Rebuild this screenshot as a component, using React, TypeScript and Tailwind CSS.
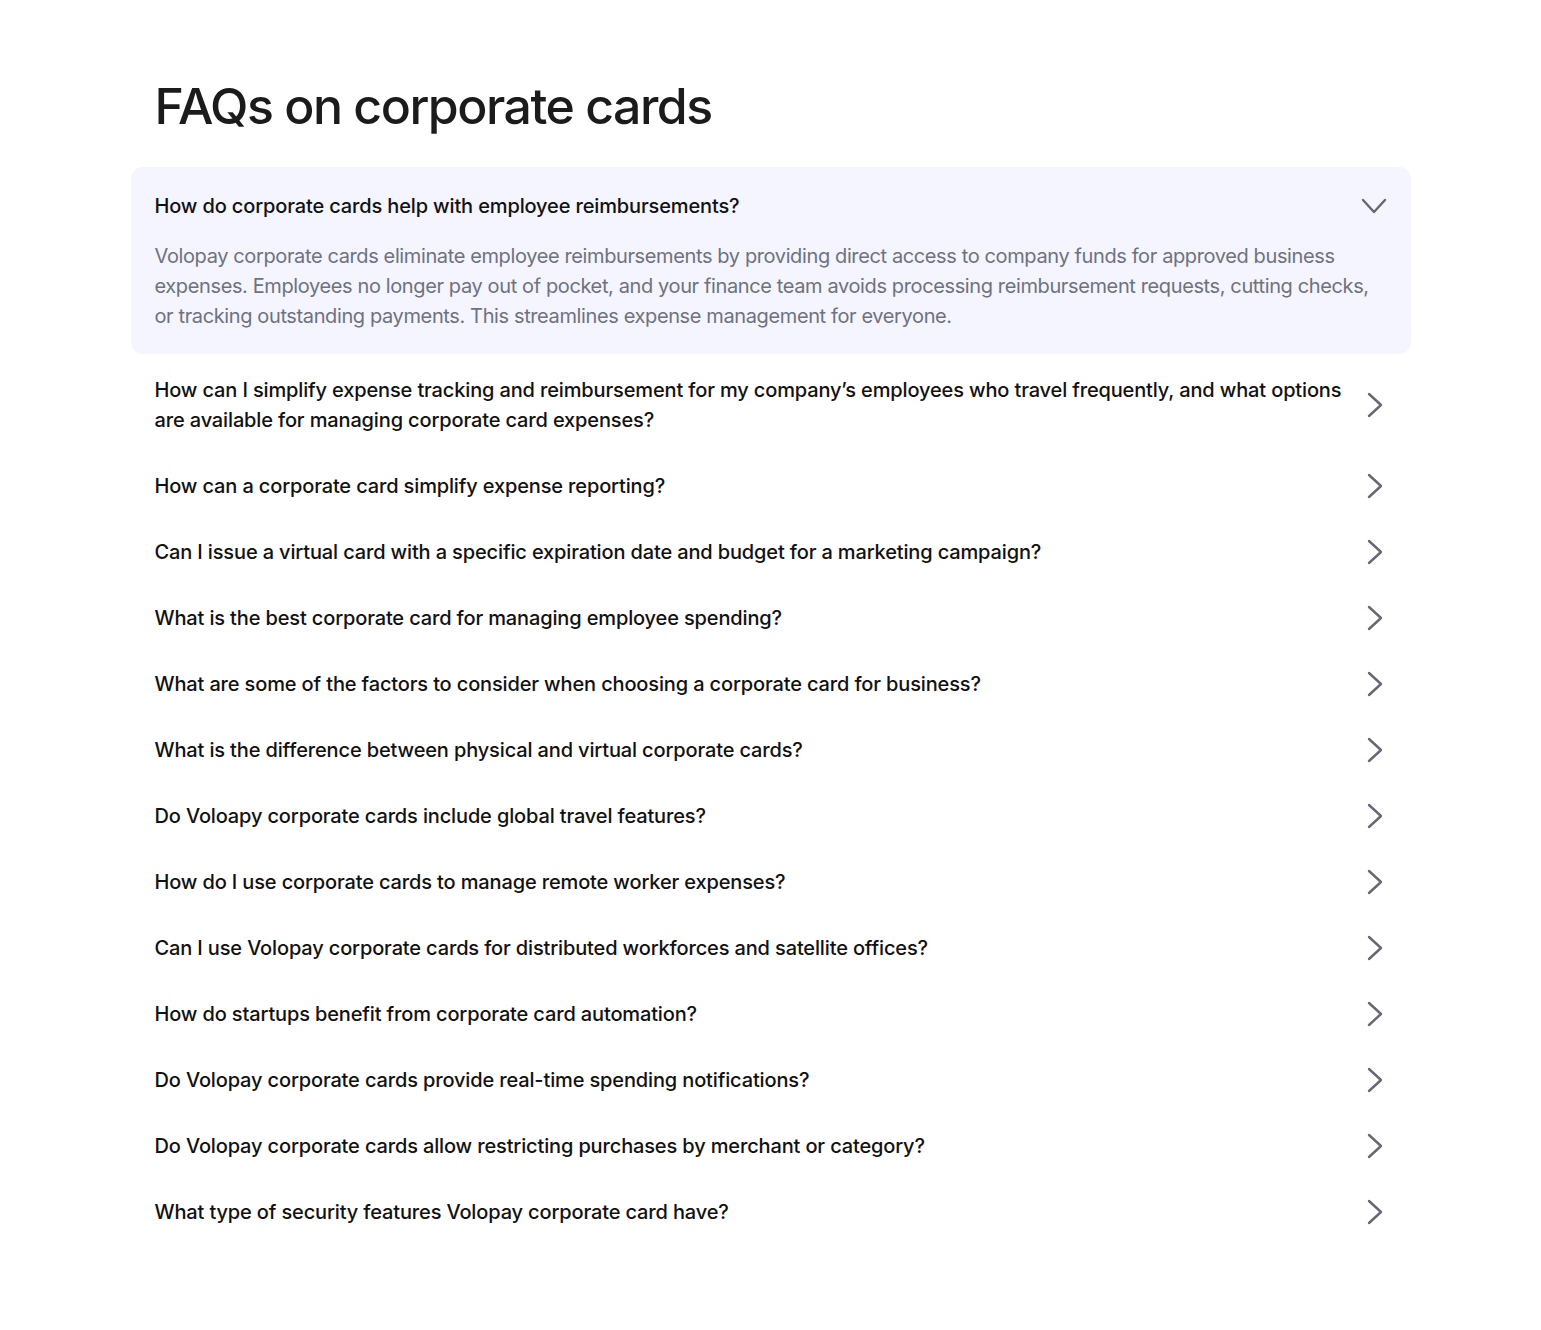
import React, { useState } from 'react';

const faqs = [
  {
    q: 'How do corporate cards help with employee reimbursements?',
    a: 'Volopay corporate cards eliminate employee reimbursements by providing direct access to company funds for approved business expenses. Employees no longer pay out of pocket, and your finance team avoids processing reimbursement requests, cutting checks, or tracking outstanding payments. This streamlines expense management for everyone.',
  },
  {
    q: 'How can I simplify expense tracking and reimbursement for my company\u2019s employees who travel frequently, and what options are available for managing corporate card expenses?',
  },
  { q: 'How can a corporate card simplify expense reporting?' },
  { q: 'Can I issue a virtual card with a specific expiration date and budget for a marketing campaign?' },
  { q: 'What is the best corporate card for managing employee spending?' },
  { q: 'What are some of the factors to consider when choosing a corporate card for business?' },
  { q: 'What is the difference between physical and virtual corporate cards?' },
  { q: 'Do Voloapy corporate cards include global travel features?' },
  { q: 'How do I use corporate cards to manage remote worker expenses?' },
  { q: 'Can I use Volopay corporate cards for distributed workforces and satellite offices?' },
  { q: 'How do startups benefit from corporate card automation?' },
  { q: 'Do Volopay corporate cards provide real-time spending notifications?' },
  { q: 'Do Volopay corporate cards allow restricting purchases by merchant or category?' },
  { q: 'What type of security features Volopay corporate card have?' },
];

const ChevronRight = () => (
  <svg className="mr-1 shrink-0" width="16" height="26" viewBox="0 0 16 26" fill="none" stroke="#646875" strokeWidth={2.4} strokeLinecap="round" strokeLinejoin="round">
    <path d="M2 2l12 11-12 11" />
  </svg>
);

const ChevronDown = () => (
  <svg className="shrink-0" width="26" height="16" viewBox="0 0 26 16" fill="none" stroke="#646875" strokeWidth={2.4} strokeLinecap="round" strokeLinejoin="round">
    <path d="M2 2l11 12 11-12" />
  </svg>
);

export default function App() {
  const [open, setOpen] = useState(0);

  return (
    <div className="min-h-[1330px] bg-white font-['Inter',sans-serif] text-[#161616]">
      <div className="mx-auto w-[1280px] pt-[72px]">
        <h1 className="px-6 text-[50px] leading-[68px] font-medium tracking-[-0.03em] text-[#1b1b1b]">
          FAQs on corporate cards
        </h1>
        <div className="mt-[27px] flex flex-col">
          {faqs.map((f, i) =>
            i === open ? (
              <div key={i} className="mb-[3px] rounded-xl bg-[#f4f5fe] px-6 pt-6 pb-[23px]">
                <button onClick={() => setOpen(-1)} className="flex w-full items-center justify-between gap-6 text-left">
                  <span className="text-[20px] leading-[30px] font-medium tracking-[-0.007em] text-[#111]">{f.q}</span>
                  <ChevronDown />
                </button>
                <p className="mt-5 pr-2 text-[20px] leading-[30px] tracking-[-0.019em] text-[#6e7280]">{f.a}</p>
              </div>
            ) : (
              <button
                key={i}
                onClick={() => setOpen(i)}
                className="flex w-full items-center justify-between gap-6 px-6 py-[18px] text-left"
              >
                <span className="text-[20px] leading-[30px] font-medium tracking-[-0.007em] text-[#111]">{f.q}</span>
                <ChevronRight />
              </button>
            )
          )}
        </div>
      </div>
    </div>
  );
}
